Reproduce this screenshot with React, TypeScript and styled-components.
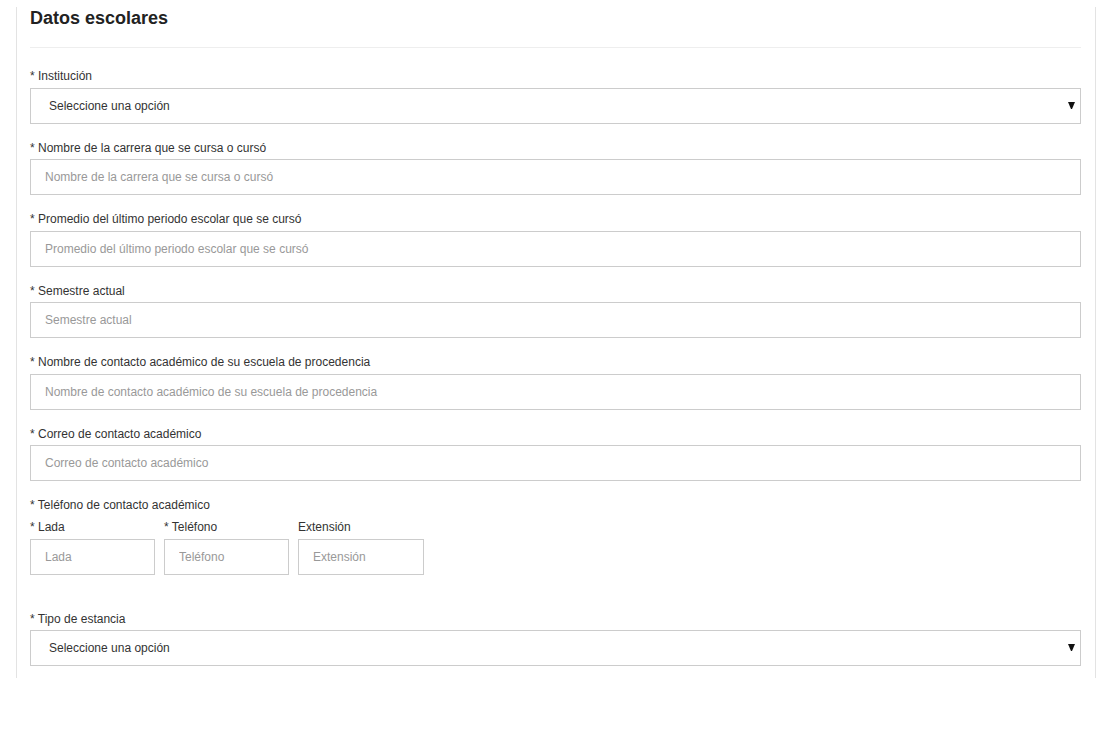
import React from 'react';
import styled, { createGlobalStyle } from 'styled-components';

const GlobalStyle = createGlobalStyle`
    body {
        margin: 0;
        background: #fff;
        font-family: "Liberation Sans", Arial, sans-serif;
        color: #333;
    }
    * { box-sizing: border-box; }
`;

const Page = styled.div`
    padding: 7px 0 0 16px;
    width: 1118px;
    height: 740px;
`;
const Panel = styled.section`
    width: 1080px;
    border-left: 1px solid #e3e3e3;
    border-right: 1px solid #e3e3e3;
    padding: 0 14px 12px 13px;
`;
const Header = styled.header`
    padding-bottom: 18px;
    border-bottom: 1px solid #eeeeee;
    margin-bottom: 20px;
`;
const Title = styled.h2`
    margin: 0;
    font-size: 18px;
    line-height: 22px;
    font-weight: bold;
    color: #222;
`;
const Group = styled.div<{ $space?: number }>`
    margin-bottom: ${props => props.$space ?? 16}px;
`;
const Label = styled.label`
    display: block;
    font-size: 12px;
    line-height: 17.5px;
    color: #333;
    margin-bottom: 2px;
`;
const Input = styled.input`
    display: block;
    width: 100%;
    height: 36px;
    border: 1px solid #cccccc;
    border-radius: 0;
    padding: 0 14px;
    font-family: inherit;
    font-size: 12px;
    color: #333;
    outline: none;
    &::placeholder {
        color: #999;
    }
`;
const SelectWrap = styled.div`
    position: relative;
`;
const Select = styled.select`
    display: block;
    width: 100%;
    height: 36px;
    border: 1px solid #cccccc;
    border-radius: 0;
    background: #fff;
    appearance: none;
    padding: 0 18px;
    font-family: inherit;
    font-size: 12px;
    color: #333;
    outline: none;
`;
const Arrow = styled.svg`
    position: absolute;
    right: 6px;
    top: 14px;
    pointer-events: none;
`;
const PhoneRow = styled.div`
    display: grid;
    grid-template-columns: 125px 125px 126px;
    column-gap: 9px;
    margin-top: 4.5px;
`;

function DropDown() {
    return (
        <SelectWrap>
            <Select defaultValue="">
                <option value="">Seleccione una opción</option>
            </Select>
            <Arrow width="7" height="7" viewBox="0 0 7 7">
                <polygon points="0,0 7,0 4,7 3,7" fill="#111" />
            </Arrow>
        </SelectWrap>
    );
}

const textFields = [
    'Nombre de la carrera que se cursa o cursó',
    'Promedio del último periodo escolar que se cursó',
    'Semestre actual',
    'Nombre de contacto académico de su escuela de procedencia',
    'Correo de contacto académico',
];

const phoneFields = [
    { label: '* Lada', placeholder: 'Lada' },
    { label: '* Teléfono', placeholder: 'Teléfono' },
    { label: 'Extensión', placeholder: 'Extensión' },
];

export default function App() {
    return (
        <Page>
            <GlobalStyle />
            <Panel>
                <Header>
                    <Title>Datos escolares</Title>
                </Header>
                <Group>
                    <Label>* Institución</Label>
                    <DropDown />
                </Group>
                {textFields.map(field => (
                    <Group key={field}>
                        <Label>* {field}</Label>
                        <Input placeholder={field} />
                    </Group>
                ))}
                <Group $space={36}>
                    <Label>* Teléfono de contacto académico</Label>
                    <PhoneRow>
                        {phoneFields.map(f => (
                            <div key={f.label}>
                                <Label>{f.label}</Label>
                                <Input placeholder={f.placeholder} />
                            </div>
                        ))}
                    </PhoneRow>
                </Group>
                <Group $space={0}>
                    <Label>* Tipo de estancia</Label>
                    <DropDown />
                </Group>
            </Panel>
        </Page>
    );
}
